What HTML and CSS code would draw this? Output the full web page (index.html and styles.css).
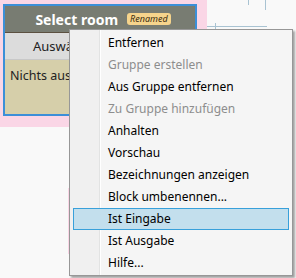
FILE: index.html
```html
<!DOCTYPE html>
<html>
<head>
<meta charset="utf-8">
<link rel="stylesheet" href="styles.css">
</head>
<body>
<div class="canvas">
  <svg class="wires" width="296" height="278" viewBox="0 0 296 278">
    <path d="M207 26.5H267" stroke="#a9c3d2" stroke-width="1" fill="none"/>
    <path d="M248.5 0V5" stroke="#a9c3d2" stroke-width="1" fill="none"/>
    <path d="M265.5 0V10" stroke="#a9c3d2" stroke-width="1" fill="none"/>
    <path d="M215.5 23V29" stroke="#a9c3d2" stroke-width="1" fill="none"/>
  </svg>
  <div class="peer"></div>
  <div class="group">
    <div class="node">
      <div class="node-head">
        <span class="node-title">Select room</span>
        <span class="badge">Renamed</span>
      </div>
      <div class="node-row">Auswählen</div>
      <div class="node-body">Nichts ausgewählt</div>
    </div>
  </div>
  <ul class="menu">
    <li class="item">Entfernen</li>
    <li class="item disabled">Gruppe erstellen</li>
    <li class="item">Aus Gruppe entfernen</li>
    <li class="item disabled">Zu Gruppe hinzufügen</li>
    <li class="item">Anhalten</li>
    <li class="item">Vorschau</li>
    <li class="item">Bezeichnungen anzeigen</li>
    <li class="item">Block umbenennen...</li>
    <li class="item active">Ist Eingabe</li>
    <li class="item">Ist Ausgabe</li>
    <li class="item">Hilfe...</li>
  </ul>
</div>
</body>
</html>
```

FILE: styles.css
```css
html, body {
  margin: 0;
  padding: 0;
  background: #f9f9f9;
}
.canvas {
  position: relative;
  width: 296px;
  height: 278px;
  overflow: hidden;
  font-family: "Noto Sans", "Open Sans", sans-serif;
}
.wires {
  position: absolute;
  left: 0;
  top: 0;
}
.peer {
  position: absolute;
  left: 68px;
  top: 188px;
  width: 160px;
  height: 66px;
  background: #fad6e6;
}
.group {
  width: 207px;
  height: 127px;
  background: #fad6e6;
  padding: 4px 0 0 3px;
  box-sizing: border-box;
}
.node {
  width: 194px;
  height: 112px;
  border: 2px solid #3c8fd8;
  box-sizing: border-box;
  display: flex;
  flex-direction: column;
  background: #d6cfaa;
}
.node-head {
  height: 27px;
  background: #787c72;
  border-bottom: 1px solid #5b5040;
  display: flex;
  align-items: center;
  justify-content: center;
  gap: 9px;
  padding-left: 6px;
  box-sizing: border-box;
}
.node-title {
  color: #ffffff;
  font-weight: bold;
  font-size: 14px;
}
.badge {
  background: #f6d48c;
  color: #3a2c10;
  font-style: italic;
  font-size: 9px;
  line-height: 12px;
  padding: 0 3px;
  border-radius: 3px;
}
.node-row {
  height: 27px;
  background: #dcdcdc;
  border-bottom: 1px solid #c8c8c8;
  box-sizing: border-box;
  font-size: 13px;
  line-height: 26px;
  padding-left: 28px;
  color: #222;
  white-space: nowrap;
}
.node-body {
  flex: 1;
  font-size: 12.5px;
  color: #222;
  padding: 7px 0 0 5px;
  white-space: nowrap;
}
.menu {
  position: absolute;
  left: 69px;
  top: 29px;
  width: 224px;
  margin: 0;
  padding: 2px 0 1px;
  list-style: none;
  box-sizing: border-box;
  border: 1px solid #979797;
  background: linear-gradient(to right, #f0f0f0 0, #f0f0f0 29px, #e2e3e3 29px, #e2e3e3 30px, #ffffff 30px, #ffffff 31px, #f5f5f5 31px);
  box-shadow: 2px 2px 2px rgba(0, 0, 0, 0.35);
  font-size: 12px;
  color: #000;
}
.item {
  height: 22px;
  line-height: 20px;
  margin: 0 3px;
  padding-left: 34px;
  border: 1px solid transparent;
  box-sizing: border-box;
  white-space: nowrap;
}
.item.disabled {
  color: #8d8d8d;
}
.item.active {
  background: #c3dfed;
  border-color: #38a0da;
}
```
